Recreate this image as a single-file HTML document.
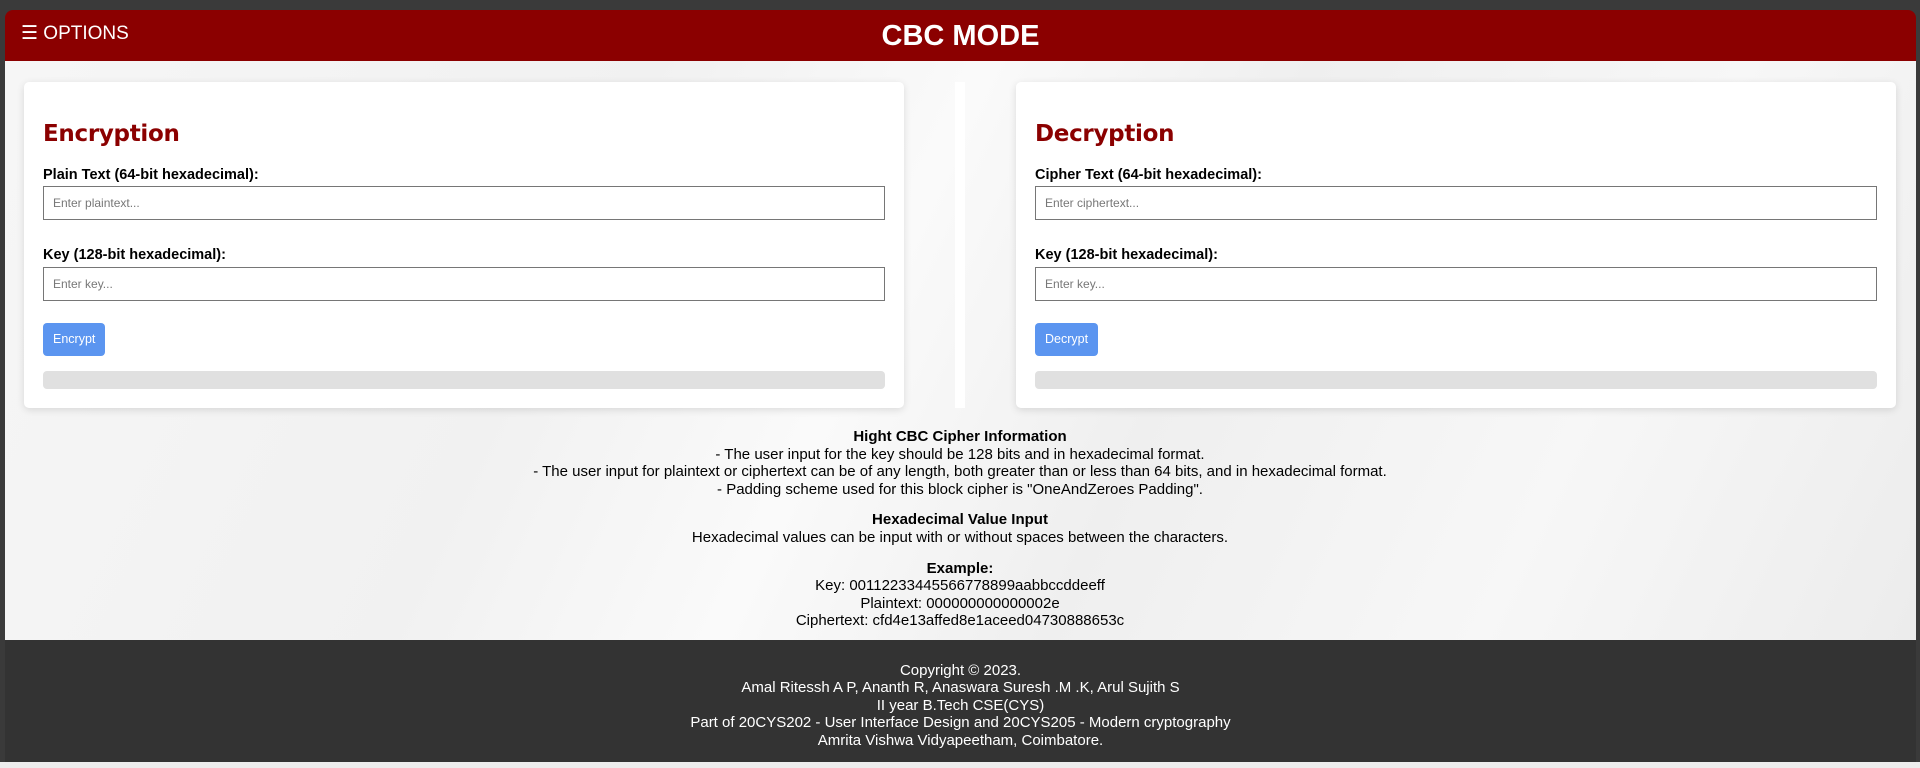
<!DOCTYPE html>
<html><head><meta charset="utf-8"><style>
*{margin:0;padding:0;box-sizing:border-box}
body{width:1920px;height:768px;background:#3a3a3a;font-family:"Liberation Sans",Arial,sans-serif;position:relative;overflow:hidden}
.hdr{position:absolute;left:5px;top:10px;width:1911px;height:51px;background:#8b0000;border-radius:8px 8px 0 0;color:#fff}
.opt{position:absolute;left:16px;top:12px;font-size:19px}
.ttl{position:absolute;left:0;right:0;top:10px;text-align:center;font-size:29px;font-weight:bold}
.main{position:absolute;left:5px;top:61px;width:1911px;height:579px;background:linear-gradient(115deg,#f6f6f6 0%,#f1f1f1 30%,#fafafa 45%,#efefef 60%,#f7f7f7 80%,#ececec 100%)}
.card{position:absolute;top:82px;width:880px;height:326px;background:#fff;border-radius:5px;box-shadow:0 2px 8px rgba(0,0,0,.12)}
.card h2{position:absolute;left:19px;top:39px;font-family:"DejaVu Sans",sans-serif;font-size:23px;font-weight:bold;color:#8b0000;letter-spacing:-0.3px}
.lbl{position:absolute;left:19px;font-size:14.5px;font-weight:bold;color:#000}
.inp{position:absolute;left:19px;width:842px;height:34px;border:1px solid #767676;background:#fff;font-size:12px;color:#777;padding:9px 9px}
.btn{position:absolute;left:19px;top:241px;height:33px;background:#5b95f0;border-radius:4px;color:#fff;font-size:12.5px;padding:9px 10px}
.bar{position:absolute;left:19px;top:289px;width:842px;height:18px;background:#e0e0e0;border-radius:4px}
.info{position:absolute;left:0;width:1920px;top:428px;text-align:center;font-size:15px;line-height:17.6px;color:#000}
.info div+div{margin-top:13px}
.foot{position:absolute;left:5px;top:640px;width:1911px;height:122px;background:#333;color:#fff;text-align:center;font-size:15px;line-height:17.4px;padding-top:22px}
.bot{position:absolute;left:0;top:762px;width:1920px;height:6px;background:#ededed}
</style></head><body>
<div class="hdr"><div class="opt">☰ OPTIONS</div><div class="ttl">CBC MODE</div></div>
<div class="main"></div>
<div style="position:absolute;left:955px;top:82px;width:10px;height:326px;background:#fff"></div>
<div class="card" style="left:24px">
<h2>Encryption</h2>
<div class="lbl" style="top:85px">Plain Text (64-bit hexadecimal):</div>
<div class="inp" style="top:104px">Enter plaintext...</div>
<div class="lbl" style="top:165px">Key (128-bit hexadecimal):</div>
<div class="inp" style="top:185px">Enter key...</div>
<div class="btn">Encrypt</div>
<div class="bar"></div>
</div>
<div class="card" style="left:1016px">
<h2>Decryption</h2>
<div class="lbl" style="top:85px">Cipher Text (64-bit hexadecimal):</div>
<div class="inp" style="top:104px">Enter ciphertext...</div>
<div class="lbl" style="top:165px">Key (128-bit hexadecimal):</div>
<div class="inp" style="top:185px">Enter key...</div>
<div class="btn">Decrypt</div>
<div class="bar"></div>
</div>
<div class="info">
<div><b>Hight CBC Cipher Information</b><br>
- The user input for the key should be 128 bits and in hexadecimal format.<br>
- The user input for plaintext or ciphertext can be of any length, both greater than or less than 64 bits, and in hexadecimal format.<br>
- Padding scheme used for this block cipher is "OneAndZeroes Padding".</div>
<div><b>Hexadecimal Value Input</b><br>
Hexadecimal values can be input with or without spaces between the characters.</div>
<div><b>Example:</b><br>
Key: 00112233445566778899aabbccddeeff<br>
Plaintext: 000000000000002e<br>
Ciphertext: cfd4e13affed8e1aceed04730888653c</div>
</div>
<div class="foot">
Copyright © 2023.<br>
Amal Ritessh A P, Ananth R, Anaswara Suresh .M .K, Arul Sujith S<br>
II year B.Tech CSE(CYS)<br>
Part of 20CYS202 - User Interface Design and 20CYS205 - Modern cryptography<br>
Amrita Vishwa Vidyapeetham, Coimbatore.
</div>
<div class="bot"></div>
</body></html>
